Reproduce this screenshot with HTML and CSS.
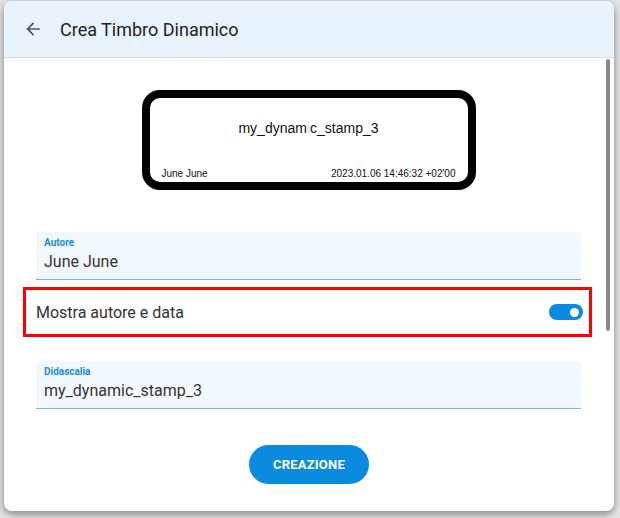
FILE: index.html
```html
<!DOCTYPE html>
<html>
<head>
<meta charset="utf-8">
<link rel="stylesheet" href="styles.css">
</head>
<body>
<div class="page">
  <div class="dialog">
    <div class="header">
      <svg class="back" width="20" height="20" viewBox="0 0 24 24"><path d="M20 11H7.83l5.59-5.59L12 4l-8 8 8 8 1.41-1.41L7.83 13H20v-2z" fill="#555"/></svg>
      <div class="title">Crea Timbro Dinamico</div>
    </div>
    <div class="content">
      <div class="scrollbar"></div>
      <div class="stamp-wrap">
        <div class="stamp">
          <div class="stamp-title">my_dynam<span class="faint">i</span>c_stamp_3</div>
          <div class="stamp-foot">
            <span>June June</span>
            <span>2023.01.06 14:46:32 +02'00</span>
          </div>
        </div>
      </div>
      <div class="field field-first">
        <div class="label">Autore</div>
        <div class="value">June June</div>
      </div>
      <div class="toggle-row">
        <span class="toggle-text">Mostra autore e data</span>
        <span class="switch"><span class="knob"></span></span>
      </div>
      <div class="field field-second">
        <div class="label">Didascalia</div>
        <div class="value">my_dynamic_stamp_3</div>
      </div>
      <div class="actions">
        <button class="btn">CREAZIONE</button>
      </div>
    </div>
  </div>
</div>
</body>
</html>
```
FILE: styles.css
```css
* { box-sizing: border-box; }
html, body { margin: 0; padding: 0; }
body {
  width: 620px;
  height: 518px;
  overflow: hidden;
  background: #e6e6e6;
  font-family: Roboto, "Liberation Sans", sans-serif;
}
.page {
  padding: 1px 0 0 4px;
}
.dialog {
  width: 610px;
  height: 510px;
  background: #fff;
  border-radius: 8px;
  box-shadow: 0 3px 8px rgba(0,0,0,0.45);
  overflow: hidden;
  display: flex;
  flex-direction: column;
}
.header {
  height: 57px;
  flex: none;
  background: #e8f4fd;
  border-bottom: 1px solid #d3dde6;
  display: flex;
  align-items: center;
  padding-left: 19px;
}
.back { display: block; margin-right: 17px; }
.title {
  font-size: 18px;
  color: #222;
  letter-spacing: 0;
}
.content {
  position: relative;
  flex: 1;
  padding: 0 33px 0 32px;
}
.scrollbar {
  position: absolute;
  left: 602px;
  top: 1px;
  width: 4px;
  height: 272px;
  background: #8a8a8a;
  border-radius: 2px;
}
.stamp-wrap {
  display: flex;
  justify-content: center;
  padding-top: 32px;
}
.stamp {
  width: 334px;
  height: 100px;
  border: 8px solid #000;
  border-radius: 18px;
  font-family: "Liberation Sans", Arial, sans-serif;
  color: #111;
  display: flex;
  flex-direction: column;
  padding: 22px 12px 0 12px;
}
.stamp-title {
  text-align: center;
  font-size: 14px;
  line-height: 16px;
}
.faint { color: #d8d8d8; }
.stamp-foot {
  margin-top: auto;
  display: flex;
  justify-content: space-between;
  font-size: 10px;
  line-height: 11px;
  padding: 0 0 3px 0;
}
.field {
  height: 48px;
  background: #f3f8fd;
  border-bottom: 1px solid #7bb5e2;
  border-radius: 4px 4px 0 0;
  padding: 5px 8px 0 8px;
}
.field-first { margin-top: 42px; }
.field-second { margin-top: 24px; }
.label {
  font-size: 10px;
  font-weight: 700;
  color: #1a8ee0;
  line-height: 12px;
}
.value {
  font-size: 16px;
  color: #333;
  line-height: 20px;
  margin-top: 3px;
}
.toggle-row {
  margin: 7px -11px 0 -13px;
  height: 50px;
  border: 3px solid #f00;
  display: flex;
  align-items: center;
  justify-content: space-between;
  padding: 0 6px 0 10px;
}
.toggle-text {
  font-size: 16px;
  color: #333;
}
.switch {
  width: 34px;
  height: 16px;
  border-radius: 8px;
  background: #0a8ae0;
  display: flex;
  align-items: center;
  justify-content: flex-end;
  padding-right: 4px;
}
.knob {
  width: 9px;
  height: 9px;
  border-radius: 50%;
  background: #fff;
}
.actions {
  display: flex;
  justify-content: center;
  padding-top: 36px;
}
.btn {
  width: 120px;
  height: 39px;
  border: none;
  border-radius: 20px;
  background: #0a8be0;
  color: #fff;
  font-family: Roboto, "Liberation Sans", sans-serif;
  font-weight: 700;
  font-size: 13px;
  letter-spacing: 0.2px;
  margin-left: 1px;
}
```
